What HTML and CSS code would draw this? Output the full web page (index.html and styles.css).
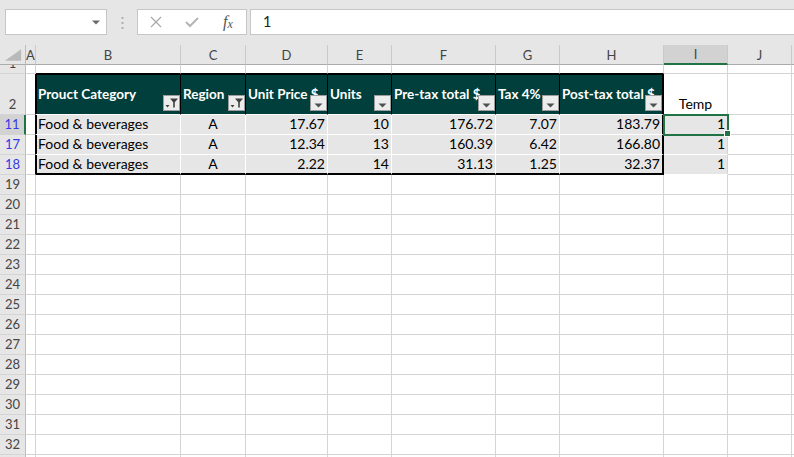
FILE: index.html
```html
<!DOCTYPE html>
<html>
<head>
<meta charset="utf-8">
<link rel="stylesheet" href="styles.css">
</head>
<body>
<div class="bar">
  <div class="namebox"><svg width="8" height="5" viewBox="0 0 8 5"><path d="M0 0.5h8L4 4.5z" fill="#6a6a6a"/></svg></div>
  <svg class="dots" width="3" height="12" viewBox="0 0 3 12"><rect x="0.5" y="0" width="2" height="2" fill="#b0b0b0"/><rect x="0.5" y="5" width="2" height="2" fill="#b0b0b0"/><rect x="0.5" y="10" width="2" height="2" fill="#b0b0b0"/></svg>
  <div class="fbtns">
    <span class="fb"><svg width="12" height="12" viewBox="0 0 12 12"><path d="M1 1L11 11M11 1L1 11" stroke="#a8a8a8" stroke-width="1.2" fill="none"/></svg></span>
    <span class="fb"><svg width="14" height="12" viewBox="0 0 14 12"><path d="M1 6l4 4L13 2" fill="none" stroke="#b4b4b4" stroke-width="2"/></svg></span>
    <span class="fb fx">f<span class="fxx">x</span></span>
  </div>
  <div class="finput">1</div>
</div>
<div class="sheet">
  <div class="ch corner"><svg width="26" height="20" viewBox="0 0 26 20"><path d="M22 4V16H5z" fill="#b9b9b9"/></svg></div>
  <div class="ch">A</div><div class="ch">B</div><div class="ch">C</div><div class="ch">D</div><div class="ch">E</div><div class="ch">F</div><div class="ch">G</div><div class="ch">H</div><div class="ch sel">I</div><div class="ch">J</div><div class="ch"></div>

  <div class="rh r1"><span>1</span></div><div class="c"></div><div class="c tt"></div><div class="c tt"></div><div class="c tt"></div><div class="c tt"></div><div class="c tt"></div><div class="c tt"></div><div class="c tt"></div><div class="c"></div><div class="c"></div><div class="c"></div>

  <div class="rh">2</div><div class="c ta"></div>
  <div class="c th first"><span>Prouct Category</span><i class="fbtn"><svg width="15" height="14" viewBox="0 0 15 14"><path d="M6 2.5h8l-3.2 3.8v5.2h-1.6V6.3z" fill="#404040"/><path d="M1.5 9h4l-2 2.5z" fill="#404040"/></svg></i></div>
  <div class="c th"><span>Region</span><i class="fbtn"><svg width="15" height="14" viewBox="0 0 15 14"><path d="M6 2.5h8l-3.2 3.8v5.2h-1.6V6.3z" fill="#404040"/><path d="M1.5 9h4l-2 2.5z" fill="#404040"/></svg></i></div>
  <div class="c th"><span>Unit Price $</span><i class="fbtn"><svg width="15" height="14" viewBox="0 0 15 14"><path d="M3.5 7.5h8l-4 4z" fill="#505050"/></svg></i></div>
  <div class="c th"><span>Units</span><i class="fbtn"><svg width="15" height="14" viewBox="0 0 15 14"><path d="M3.5 7.5h8l-4 4z" fill="#505050"/></svg></i></div>
  <div class="c th"><span>Pre-tax total $</span><i class="fbtn"><svg width="15" height="14" viewBox="0 0 15 14"><path d="M3.5 7.5h8l-4 4z" fill="#505050"/></svg></i></div>
  <div class="c th"><span>Tax 4%</span><i class="fbtn"><svg width="15" height="14" viewBox="0 0 15 14"><path d="M3.5 7.5h8l-4 4z" fill="#505050"/></svg></i></div>
  <div class="c th last"><span>Post-tax total $</span><i class="fbtn"><svg width="15" height="14" viewBox="0 0 15 14"><path d="M3.5 7.5h8l-4 4z" fill="#505050"/></svg></i></div>
  <div class="c ctr">Temp</div><div class="c"></div><div class="c"></div>

  <div class="rh sel flt">11</div><div class="c ta"></div>
  <div class="c td first">Food &amp; beverages</div><div class="c td ctr">A</div><div class="c td num">17.67</div><div class="c td num">10</div><div class="c td num">176.72</div><div class="c td num">7.07</div><div class="c td num last">183.79</div>
  <div class="c num gray selc">1</div><div class="c"></div><div class="c"></div>

  <div class="rh flt">17</div><div class="c ta"></div>
  <div class="c td first">Food &amp; beverages</div><div class="c td ctr">A</div><div class="c td num">12.34</div><div class="c td num">13</div><div class="c td num">160.39</div><div class="c td num">6.42</div><div class="c td num last">166.80</div>
  <div class="c num gray">1</div><div class="c"></div><div class="c"></div>

  <div class="rh flt">18</div><div class="c ta"></div>
  <div class="c td first bot">Food &amp; beverages</div><div class="c td ctr bot">A</div><div class="c td num bot">2.22</div><div class="c td num bot">14</div><div class="c td num bot">31.13</div><div class="c td num bot">1.25</div><div class="c td num last bot">32.37</div>
  <div class="c num gray">1</div><div class="c"></div><div class="c"></div>

  <div class="rh">19</div><div class="c"></div><div class="c"></div><div class="c"></div><div class="c"></div><div class="c"></div><div class="c"></div><div class="c"></div><div class="c"></div><div class="c"></div><div class="c"></div><div class="c"></div>
  <div class="rh">20</div><div class="c"></div><div class="c"></div><div class="c"></div><div class="c"></div><div class="c"></div><div class="c"></div><div class="c"></div><div class="c"></div><div class="c"></div><div class="c"></div><div class="c"></div>
  <div class="rh">21</div><div class="c"></div><div class="c"></div><div class="c"></div><div class="c"></div><div class="c"></div><div class="c"></div><div class="c"></div><div class="c"></div><div class="c"></div><div class="c"></div><div class="c"></div>
  <div class="rh">22</div><div class="c"></div><div class="c"></div><div class="c"></div><div class="c"></div><div class="c"></div><div class="c"></div><div class="c"></div><div class="c"></div><div class="c"></div><div class="c"></div><div class="c"></div>
  <div class="rh">23</div><div class="c"></div><div class="c"></div><div class="c"></div><div class="c"></div><div class="c"></div><div class="c"></div><div class="c"></div><div class="c"></div><div class="c"></div><div class="c"></div><div class="c"></div>
  <div class="rh">24</div><div class="c"></div><div class="c"></div><div class="c"></div><div class="c"></div><div class="c"></div><div class="c"></div><div class="c"></div><div class="c"></div><div class="c"></div><div class="c"></div><div class="c"></div>
  <div class="rh">25</div><div class="c"></div><div class="c"></div><div class="c"></div><div class="c"></div><div class="c"></div><div class="c"></div><div class="c"></div><div class="c"></div><div class="c"></div><div class="c"></div><div class="c"></div>
  <div class="rh">26</div><div class="c"></div><div class="c"></div><div class="c"></div><div class="c"></div><div class="c"></div><div class="c"></div><div class="c"></div><div class="c"></div><div class="c"></div><div class="c"></div><div class="c"></div>
  <div class="rh">27</div><div class="c"></div><div class="c"></div><div class="c"></div><div class="c"></div><div class="c"></div><div class="c"></div><div class="c"></div><div class="c"></div><div class="c"></div><div class="c"></div><div class="c"></div>
  <div class="rh">28</div><div class="c"></div><div class="c"></div><div class="c"></div><div class="c"></div><div class="c"></div><div class="c"></div><div class="c"></div><div class="c"></div><div class="c"></div><div class="c"></div><div class="c"></div>
  <div class="rh">29</div><div class="c"></div><div class="c"></div><div class="c"></div><div class="c"></div><div class="c"></div><div class="c"></div><div class="c"></div><div class="c"></div><div class="c"></div><div class="c"></div><div class="c"></div>
  <div class="rh">30</div><div class="c"></div><div class="c"></div><div class="c"></div><div class="c"></div><div class="c"></div><div class="c"></div><div class="c"></div><div class="c"></div><div class="c"></div><div class="c"></div><div class="c"></div>
  <div class="rh">31</div><div class="c"></div><div class="c"></div><div class="c"></div><div class="c"></div><div class="c"></div><div class="c"></div><div class="c"></div><div class="c"></div><div class="c"></div><div class="c"></div><div class="c"></div>
  <div class="rh">32</div><div class="c"></div><div class="c"></div><div class="c"></div><div class="c"></div><div class="c"></div><div class="c"></div><div class="c"></div><div class="c"></div><div class="c"></div><div class="c"></div><div class="c"></div>
  <div class="rh"></div><div class="c"></div><div class="c"></div><div class="c"></div><div class="c"></div><div class="c"></div><div class="c"></div><div class="c"></div><div class="c"></div><div class="c"></div><div class="c"></div><div class="c"></div>
</div>
</body>
</html>
```
FILE: styles.css
```css
html, body {
  margin: 0;
  padding: 0;
}
body {
  width: 794px;
  height: 457px;
  overflow: hidden;
  background: #e6e6e6;
  font-family: Lato, "Liberation Sans", sans-serif;
}

/* formula bar */
.bar {
  height: 45px;
  box-sizing: border-box;
  padding: 9px 0 0 5px;
  display: flex;
  align-items: flex-start;
  background: #e6e6e6;
}
.namebox {
  width: 102px;
  height: 26px;
  box-sizing: border-box;
  background: #fff;
  border: 1px solid #c6c6c6;
  display: flex;
  align-items: center;
  justify-content: flex-end;
  padding-right: 6px;
}
.dots {
  margin: 8px 0 0 14px;
}
.fbtns {
  margin-left: 13px;
  width: 110px;
  height: 26px;
  box-sizing: border-box;
  background: #fff;
  border: 1px solid #c6c6c6;
  display: flex;
  align-items: center;
}
.fb {
  width: 36px;
  height: 24px;
  display: flex;
  align-items: center;
  justify-content: center;
}
.fx {
  font-family: "Liberation Serif", serif;
  font-style: italic;
  font-size: 16px;
  color: #555;
}
.fxx {
  font-size: 12px;
  position: relative;
  top: 2px;
}
.finput {
  margin-left: 3px;
  flex: 1;
  height: 26px;
  box-sizing: border-box;
  background: #fff;
  border: 1px solid #c6c6c6;
  border-right: none;
  padding-left: 12px;
  font-size: 14.5px;
  line-height: 24px;
  color: #222;
}

/* sheet grid */
.sheet {
  height: 412px;
  display: grid;
  grid-template-columns: 26px 10px 145px 65px 82px 64px 104px 64px 104px 64px 64px 1fr;
  grid-template-rows: 20px 9px 41px repeat(17, 20px) 1fr;
  background: #fff;
  overflow: hidden;
}
.ch {
  box-sizing: border-box;
  background: #e6e6e6;
  border-right: 1px solid #cacaca;
  border-bottom: 1px solid #ababab;
  display: flex;
  align-items: center;
  justify-content: center;
  font-size: 13px;
  color: #444;
  overflow: hidden;
  min-width: 0;
}
.ch.corner {
  border-right-color: #bdbdbd;
}
.ch.sel {
  background: #d2d2d2;
  border-bottom: 2px solid #217346;
}
.rh {
  box-sizing: border-box;
  background: #e6e6e6;
  border-right: 1px solid #bdbdbd;
  border-bottom: 1px solid #d4d4d4;
  display: flex;
  align-items: flex-end;
  justify-content: center;
  padding-bottom: 1px;
  font-size: 13px;
  line-height: 17px;
  color: #444;
  overflow: hidden;
  min-height: 0;
}
.rh.r1 {
  align-items: flex-start;
}
.rh.r1 span {
  margin-top: -10px;
}
.rh.sel {
  background: #d2d2d2;
  border-right: 2px solid #217346;
}
.rh.flt {
  color: #3737e6;
}

.c {
  box-sizing: border-box;
  border-right: 1px solid #d4d4d4;
  border-bottom: 1px solid #d4d4d4;
  background: #fff;
  display: flex;
  align-items: flex-end;
  padding: 0 2px 2px 2px;
  font-size: 14px;
  line-height: 17px;
  color: #000;
  white-space: nowrap;
  overflow: hidden;
  min-width: 0;
  min-height: 0;
}
.num {
  justify-content: flex-end;
}
.ctr {
  justify-content: center;
}
.ta {
  border-right-color: #000;
}
.tt {
  border-bottom-color: #000;
}
.td {
  background: #e7e6e6;
  border-right-color: #fff;
  border-bottom-color: #fff;
}
.td.first {
  box-shadow: inset 1px 0 0 #000;
}
.td.last,
.th.last {
  border-right: 2px solid #000;
}
.td.bot {
  border-bottom: 2px solid #000;
  padding-bottom: 1px;
}
.th {
  position: relative;
  background: #003f3c;
  color: #fff;
  font-weight: 700;
  font-size: 13.5px;
  align-items: center;
  padding-bottom: 0;
  border-right-color: #000;
  border-bottom-color: #fff;
  box-shadow: inset 0 1px 0 #000;
}
.th.first {
  box-shadow: inset 1px 1px 0 #000;
}
.fbtn {
  position: absolute;
  right: 0;
  bottom: 3px;
  width: 17px;
  height: 16px;
  box-sizing: border-box;
  background: #ececec;
  border: 1px solid #9c9c9c;
  display: flex;
  align-items: center;
  justify-content: center;
}
.gray {
  background: #e7e6e6;
  border-bottom-color: #fff;
}
.selc {
  position: relative;
  z-index: 2;
  overflow: visible;
  outline: 2px solid #217346;
  outline-offset: -1px;
}
.selc::after {
  content: "";
  position: absolute;
  right: -4px;
  bottom: -3px;
  width: 5px;
  height: 5px;
  background: #217346;
  border: 1px solid #fff;
}
```
